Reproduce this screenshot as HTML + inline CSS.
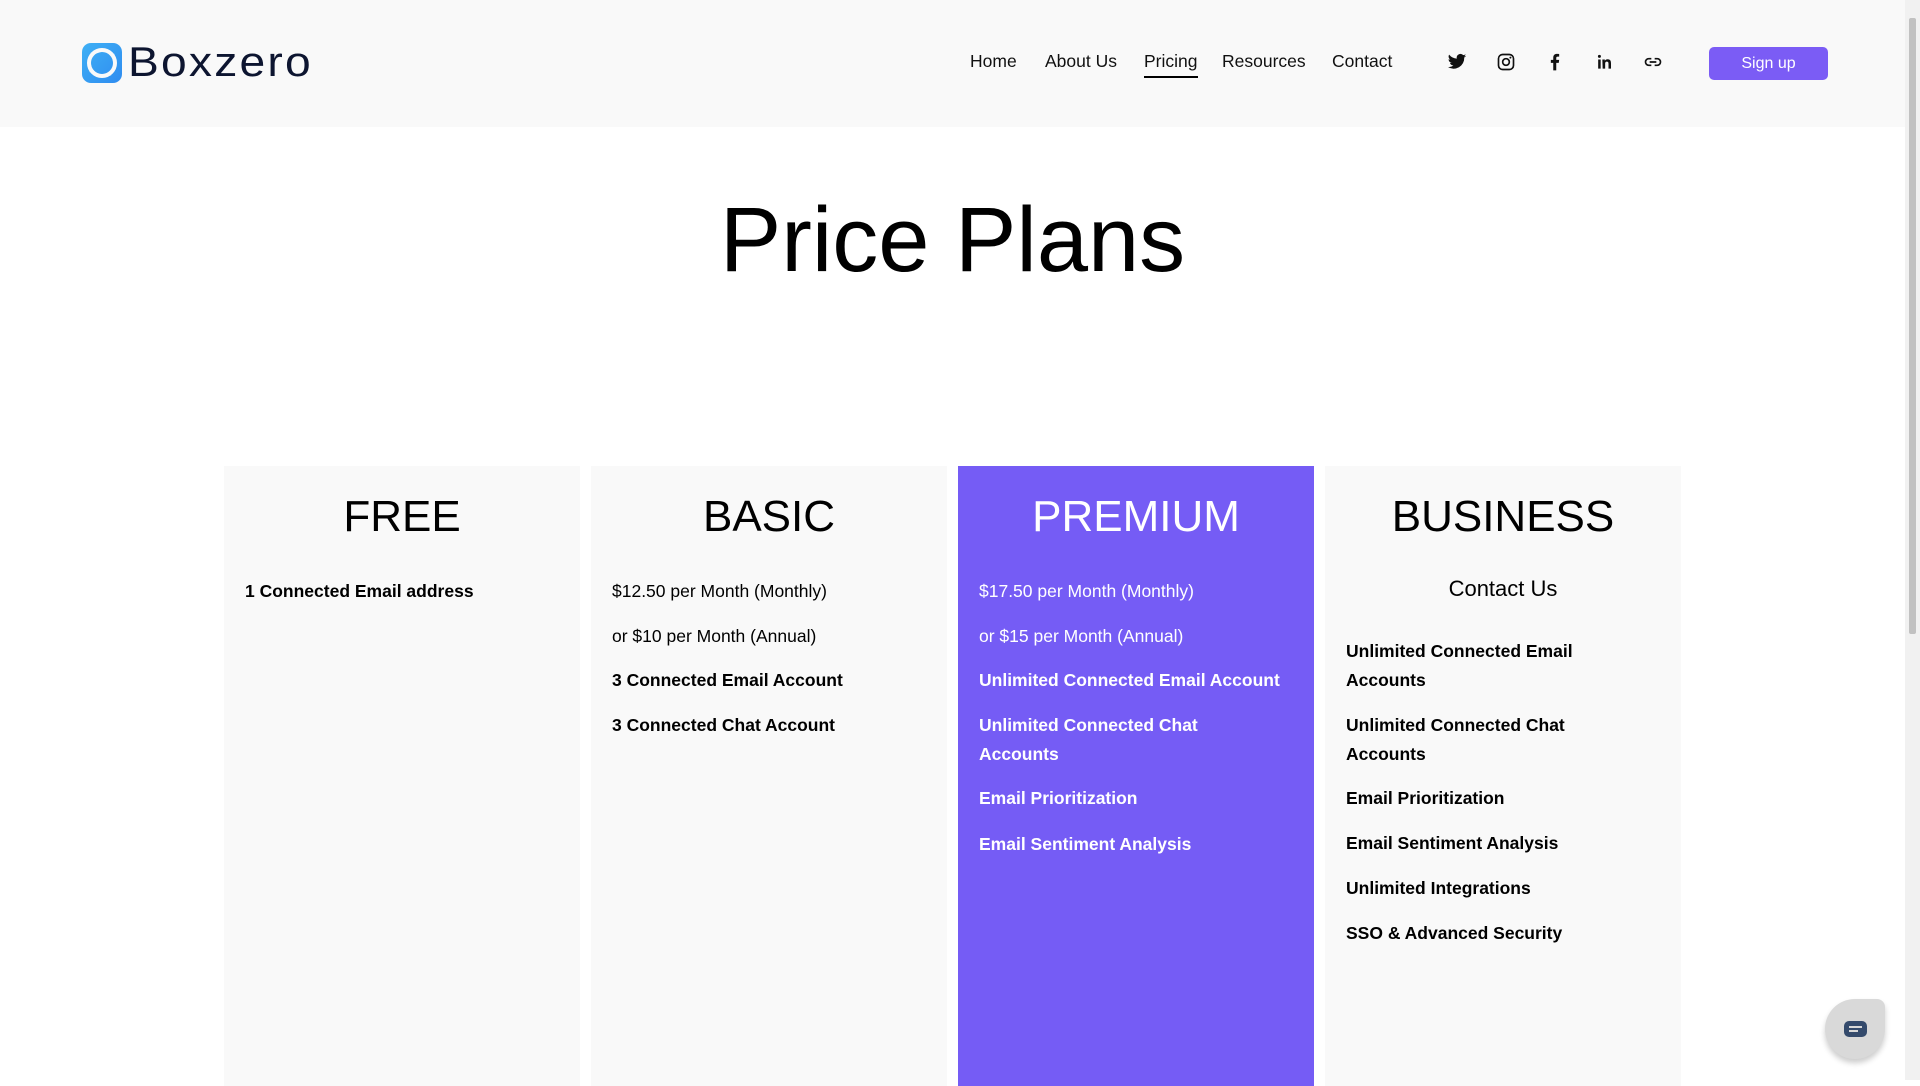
<!DOCTYPE html>
<html><head><meta charset="utf-8"><style>
*{margin:0;padding:0;box-sizing:border-box}
html,body{width:1920px;height:1080px;overflow:hidden;background:#fff;font-family:"Liberation Sans",sans-serif;color:#000}
.sb{position:absolute;right:0;top:0;width:15px;height:1080px;background:#f1f1f1}
.sb i{position:absolute;left:4px;top:18px;width:7px;height:616px;background:#c1c1c1;border-radius:2px}
header{position:absolute;left:0;top:0;width:1905px;height:127px;background:#f9f9f9}
.logo{position:absolute;left:81px;top:42px}
.logotext{position:absolute;left:128px;top:38px;font-size:42px;letter-spacing:2px;color:#0d1530;transform:scaleX(1.1);transform-origin:left}
nav a{position:absolute;top:51px;font-size:17.5px;color:#111;text-decoration:none}
.act{border-bottom:2px solid #000;padding-bottom:4px}
.ic{position:absolute;top:52px;width:20px;height:20px}
.btn{position:absolute;left:1709px;top:47px;width:119px;height:33px;background:#7b5cf5;border-radius:5px;color:#fff;font-size:16px;text-align:center;line-height:33px}
h1{position:absolute;left:0;width:1905px;top:188px;text-align:center;font-size:92px;font-weight:normal}
.card{position:absolute;top:466px;width:356px;height:620px;background:#f9f9f9}
.card h2{position:absolute;top:26px;width:100%;text-align:center;font-size:44px;font-weight:normal}
.card p{position:absolute;left:21px;right:21px;font-size:17.5px;line-height:29px}
.prem{background:#755cf5;color:#fff}
.chat{position:absolute;left:1825px;top:999px;width:60px;height:60px;background:#d9d9d9;border-radius:50%;border-top-right-radius:8px;box-shadow:0 4px 6px rgba(0,0,0,.2)}
.chat i{position:absolute;left:19px;top:22px;width:23px;height:16px;background:#344a6c;border-radius:5px}
.chat i:before,.chat i:after{content:"";position:absolute;left:5px;height:2px;background:#d9d9d9}
.chat i:before{top:5px;width:13px}.chat i:after{top:9px;width:9px}
</style></head><body>
<header>
<svg class="logo" width="42" height="42" viewBox="0 0 42 42"><defs><linearGradient id="g" x1="0" y1="0" x2="1" y2="1"><stop offset="0" stop-color="#3fb0f5"/><stop offset="1" stop-color="#2f8cf0"/></linearGradient></defs><rect x="1" y="1" width="40" height="40" rx="9" fill="url(#g)"/><circle cx="21" cy="21" r="13" fill="none" stroke="#f9f9f9" stroke-width="4"/><path d="M10 12 L22 8 M32 12 L34 24 M30 32 L18 34 M10 30 L8 18" stroke="#f9f9f9" stroke-width="2.5"/></svg>
<div class="logotext">Boxzero</div>
<nav>
<a style="left:970px">Home</a><a style="left:1045px">About Us</a><a class="act" style="left:1144px">Pricing</a><a style="left:1222px">Resources</a><a style="left:1332px">Contact</a>
</nav>
<svg class="ic" style="left:1447px" viewBox="0 0 24 24"><path d="M23 4.5a9 9 0 0 1-2.6.7 4.5 4.5 0 0 0 2-2.5 9 9 0 0 1-2.9 1.1 4.5 4.5 0 0 0-7.7 4.1A12.8 12.8 0 0 1 2.5 3.2a4.5 4.5 0 0 0 1.4 6 4.5 4.5 0 0 1-2-.6 4.5 4.5 0 0 0 3.6 4.4 4.5 4.5 0 0 1-2 .1 4.5 4.5 0 0 0 4.2 3.1A9 9 0 0 1 1 18a12.8 12.8 0 0 0 19.7-11.4A9 9 0 0 0 23 4.5z" fill="#111"/></svg>
<svg class="ic" style="left:1496px" viewBox="0 0 24 24"><rect x="3" y="3" width="18" height="18" rx="5" fill="none" stroke="#111" stroke-width="2"/><circle cx="12" cy="12" r="4" fill="none" stroke="#111" stroke-width="2"/><circle cx="17.3" cy="6.7" r="1.2" fill="#111"/></svg>
<svg class="ic" style="left:1545px" viewBox="0 0 24 24"><path d="M13.5 22v-9h3l.5-3.5h-3.5V7.3c0-1 .3-1.7 1.8-1.7H17V2.4c-.3 0-1.4-.1-2.7-.1-2.7 0-4.4 1.6-4.4 4.6v2.6H7V13h2.9v9z" fill="#111"/></svg>
<svg class="ic" style="left:1594px" viewBox="0 0 24 24"><path d="M5 9h3v11H5zM6.5 3.5a1.8 1.8 0 1 1 0 3.6 1.8 1.8 0 0 1 0-3.6zM10 9h3v1.6c.5-.9 1.6-1.9 3.4-1.9 3.4 0 4 2.2 4 5.1V20h-3v-5.5c0-1.3 0-3-1.9-3s-2.1 1.4-2.1 2.9V20h-3z" fill="#111"/></svg>
<svg class="ic" style="left:1643px" viewBox="0 0 24 24"><path d="M10 8H7a4 4 0 0 0 0 8h3M14 8h3a4 4 0 0 1 0 8h-3M8 12h8" fill="none" stroke="#111" stroke-width="2"/></svg>
<div class="btn">Sign up</div>
</header>
<h1>Price Plans</h1>
<div class="card" style="left:224px"><h2>FREE</h2>
<p style="top:111px"><b>1 Connected Email address</b></p></div>
<div class="card" style="left:591px"><h2>BASIC</h2>
<p style="top:111px">$12.50 per Month (Monthly)</p>
<p style="top:156px">or $10 per Month (Annual)</p>
<p style="top:200px"><b>3 Connected Email Account</b></p>
<p style="top:245px"><b>3 Connected Chat Account</b></p></div>
<div class="card prem" style="left:958px"><h2>PREMIUM</h2>
<p style="top:111px">$17.50 per Month (Monthly)</p>
<p style="top:156px">or $15 per Month (Annual)</p>
<p style="top:200px;right:5px"><b>Unlimited Connected Email Account</b></p>
<p style="top:245px;right:60px"><b>Unlimited Connected Chat Accounts</b></p>
<p style="top:318px"><b>Email Prioritization</b></p>
<p style="top:364px"><b>Email Sentiment Analysis</b></p></div>
<div class="card" style="left:1325px"><h2>BUSINESS</h2>
<p style="top:108px;text-align:center;font-size:22px;left:0;right:0">Contact Us</p>
<p style="top:171px;right:50px"><b>Unlimited Connected Email Accounts</b></p>
<p style="top:245px;right:50px"><b>Unlimited Connected Chat Accounts</b></p>
<p style="top:318px"><b>Email Prioritization</b></p>
<p style="top:363px"><b>Email Sentiment Analysis</b></p>
<p style="top:408px"><b>Unlimited Integrations</b></p>
<p style="top:453px"><b>SSO &amp; Advanced Security</b></p></div>
<div class="chat"><i></i></div>
<div class="sb"><i></i></div>
</body></html>
